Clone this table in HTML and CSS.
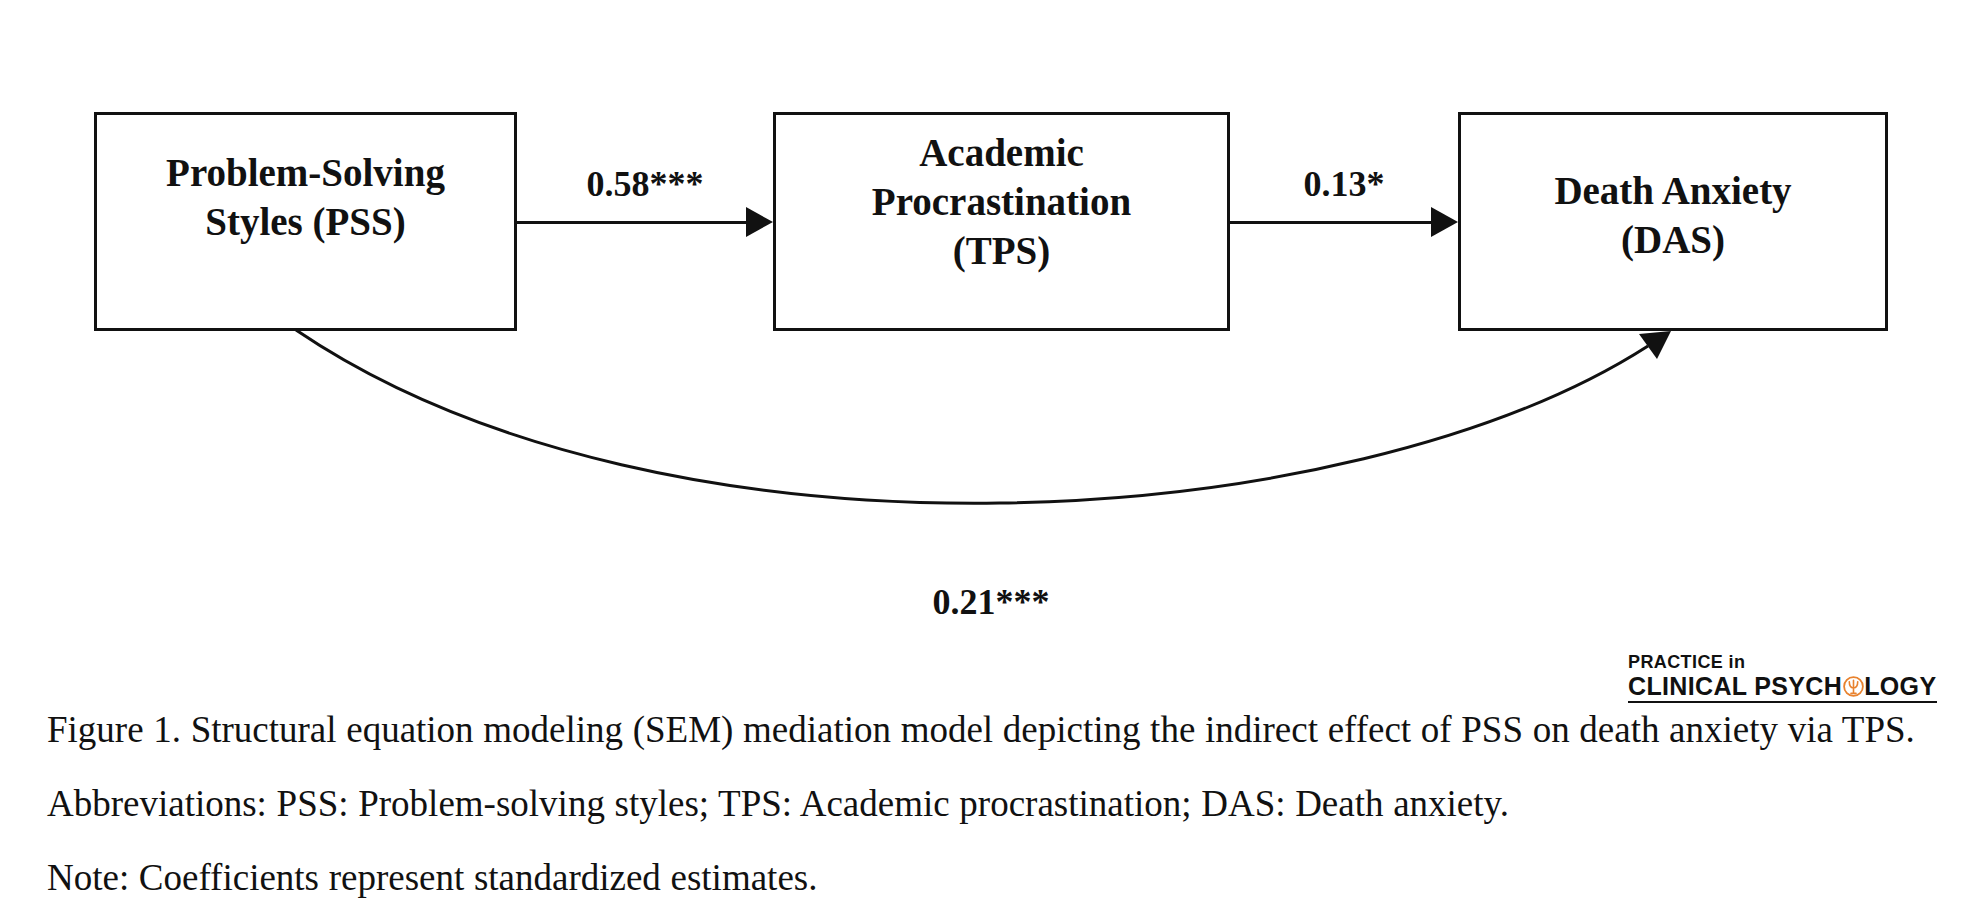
FILE: index.html
```html
<!DOCTYPE html>
<html lang="en">
<head>
<meta charset="utf-8">
<title>SEM mediation model</title>
<link rel="stylesheet" href="styles.css">
</head>
<body>
<div class="page">
  <div class="diagram">
    <svg class="curve" width="1987" height="640" viewBox="0 0 1987 640" aria-hidden="true">
      <path d="M296 330 C665 580 1352 536 1648 346" fill="none" stroke="#111" stroke-width="3"/>
      <polygon points="1671,331 1639,334 1657,359" fill="#111"/>
    </svg>
    <div class="row">
      <div class="node node-pss">Problem-Solving<br>Styles (PSS)</div>
      <div class="conn conn-a">
        <div class="coef">0.58***</div>
        <div class="arrow"><span class="shaft"></span><span class="head"></span></div>
      </div>
      <div class="node node-tps">Academic<br>Procrastination<br>(TPS)</div>
      <div class="conn conn-b">
        <div class="coef">0.13*</div>
        <div class="arrow"><span class="shaft"></span><span class="head"></span></div>
      </div>
      <div class="node node-das">Death Anxiety<br>(DAS)</div>
    </div>
    <div class="total">0.21***</div>
  </div>
  <div class="logo-wrap">
    <div class="logo">
      <div class="logo-top">PRACTICE in</div>
      <div class="logo-main">CLINICAL PSYCH<svg class="logo-o" width="21" height="21" viewBox="0 0 21 21" aria-hidden="true"><circle cx="10.5" cy="10.5" r="9.4" fill="none" stroke="#e8822e" stroke-width="1.8"/><path d="M10.5 4.4 V17.4 M6.3 5.8 Q6.3 11.6 10.5 12 Q14.7 11.6 14.7 5.8 M8 17.4 H13" fill="none" stroke="#e8822e" stroke-width="1.6" stroke-linecap="round"/></svg>LOGY</div>
    </div>
  </div>
  <div class="caption">
    <p>Figure 1. Structural equation modeling (SEM) mediation model depicting the indirect effect of PSS on death anxiety via TPS.</p>
    <p>Abbreviations: PSS: Problem-solving styles; TPS: Academic procrastination; DAS: Death anxiety.</p>
    <p>Note: Coefficients represent standardized estimates.</p>
  </div>
</div>
</body>
</html>
```

FILE: styles.css
```css
html, body {
  margin: 0;
  padding: 0;
  background: #ffffff;
}

body {
  width: 1987px;
  height: 905px;
  overflow: hidden;
  color: #111111;
  font-family: "Liberation Serif", "Times New Roman", serif;
}

.page {
  width: 1987px;
}

.diagram {
  position: relative;
  padding-top: 112px;
}

.curve {
  position: absolute;
  left: 0;
  top: 0;
  pointer-events: none;
}

.row {
  display: flex;
  align-items: flex-start;
  padding-left: 94px;
}

.node {
  box-sizing: border-box;
  height: 219px;
  border: 3px solid #111111;
  text-align: center;
  font-weight: bold;
  font-size: 39px;
  line-height: 49px;
}

.node-pss {
  width: 423px;
  padding-top: 33px;
}

.node-tps {
  width: 457px;
  padding-top: 13px;
}

.node-das {
  width: 430px;
  padding-top: 51px;
}

.conn {
  display: flex;
  flex-direction: column;
  padding-top: 52px;
}

.conn-a {
  width: 256px;
}

.conn-b {
  width: 228px;
}

.coef {
  text-align: center;
  font-weight: bold;
  font-size: 36px;
  line-height: 40px;
}

.arrow {
  display: flex;
  align-items: center;
  height: 30px;
  margin-top: 3px;
}

.shaft {
  flex: 1;
  height: 3px;
  background: #111111;
}

.head {
  width: 0;
  height: 0;
  border-left: 27px solid #111111;
  border-top: 15px solid transparent;
  border-bottom: 15px solid transparent;
}

.total {
  margin-top: 251px;
  padding-right: 5px;
  text-align: center;
  font-weight: bold;
  font-size: 36px;
  line-height: 40px;
}

.logo-wrap {
  display: flex;
  justify-content: flex-end;
  padding-right: 50px;
  margin-top: 31px;
}

.logo {
  display: flex;
  flex-direction: column;
  align-items: flex-start;
  width: 309px;
  border-bottom: 2px solid #111111;
  padding-bottom: 2px;
  font-family: "Liberation Sans", Arial, sans-serif;
  font-weight: bold;
  color: #111111;
}

.logo-top {
  font-size: 18px;
  line-height: 18px;
  letter-spacing: 0.4px;
}

.logo-main {
  margin-top: 2px;
  font-size: 25px;
  line-height: 26px;
  letter-spacing: 0.35px;
  white-space: nowrap;
}

.logo-o {
  vertical-align: -2px;
  margin: 0 0.5px;
}

.caption {
  padding-left: 47px;
  margin-top: 7px;
}

.caption p {
  margin: 0 0 34px 0;
  font-size: 37px;
  line-height: 40px;
  word-spacing: 0.4px;
  white-space: nowrap;
}

.caption p:last-child {
  margin-bottom: 0;
}
```
